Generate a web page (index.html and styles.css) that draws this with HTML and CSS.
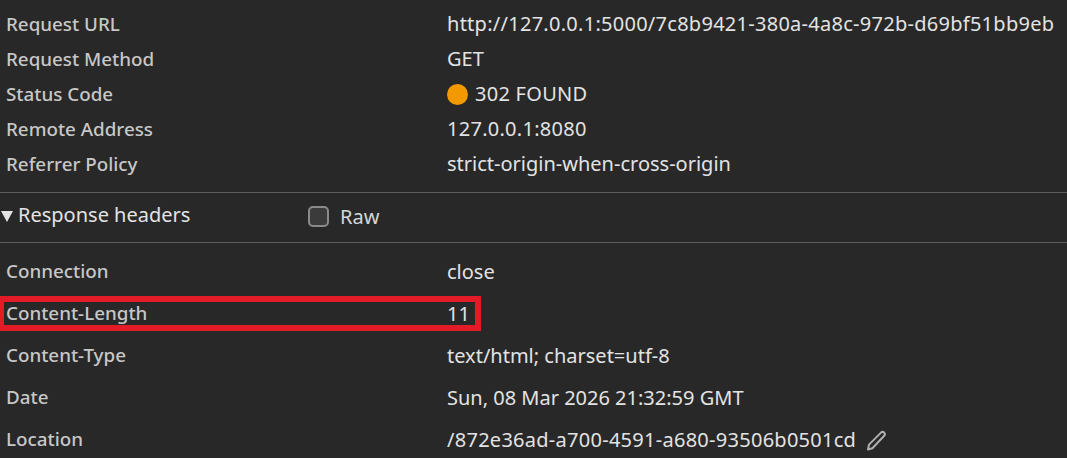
FILE: index.html
```html
<!DOCTYPE html>
<html lang="en">

<head>
  <meta charset="UTF-8" />
  <title>Network – Headers</title>
  <link rel="stylesheet" href="styles.css">
</head>

<body>
  <section class="general">
    <div class="row"><span class="name">Request URL</span><span class="value wide">http://127.0.0.1:5000/7c8b9421-380a-4a8c-972b-d69bf51bb9eb</span></div>
    <div class="row"><span class="name">Request Method</span><span class="value">GET</span></div>
    <div class="row"><span class="name">Status Code</span><span class="value wide"><i class="status-dot"></i>302 FOUND</span></div>
    <div class="row"><span class="name">Remote Address</span><span class="value wide">127.0.0.1:8080</span></div>
    <div class="row"><span class="name">Referrer Policy</span><span class="value">strict-origin-when-cross-origin</span></div>
  </section>

  <div class="section-title">
    <span class="arrow"></span>
    <span class="title-text">Response headers</span>
    <label class="raw"><span class="checkbox"></span>Raw</label>
  </div>

  <section class="headers">
    <div class="row"><span class="name">Connection</span><span class="value">close</span></div>
    <div class="row highlighted"><span class="name">Content-Length</span><span class="value">11</span><span class="red-box"></span></div>
    <div class="row"><span class="name">Content-Type</span><span class="value">text/html; charset=utf-8</span></div>
    <div class="row"><span class="name">Date</span><span class="value">Sun, 08 Mar 2026 21:32:59 GMT</span></div>
    <div class="row">
      <span class="name">Location</span>
      <span class="value wide">/872e36ad-a700-4591-a680-93506b0501cd
        <svg class="edit-icon" width="22" height="22" viewBox="0 0 22 22" fill="none" stroke="#b0b0b0" stroke-width="2" stroke-linejoin="round">
          <path d="M2 20.5 L3 15.6 L15 3.6 Q16.6 2.2 18.2 3.6 Q19.6 5.2 18.2 6.8 L6.4 19.2 Z" />
        </svg>
      </span>
    </div>
  </section>
</body>

</html>
```

FILE: styles.css
```css
* {
  margin: 0;
  padding: 0;
  box-sizing: border-box;
}

body {
  font-family: "Noto Sans", "Open Sans", sans-serif;
  font-size: 20px;
  background-color: #282828;
  color: #e3e3e3;
  overflow: hidden;
}

.general {
  padding: 7px 0 10px;
  border-bottom: 1px solid #5e5e5e;
}

.row {
  position: relative;
  display: flex;
  align-items: center;
  padding: 0 0 2px 6px;
}

.general .row {
  height: 35px;
}

.headers {
  padding-top: 8px;
}

.headers .row {
  height: 42px;
}

.name {
  width: 441px;
  flex-shrink: 0;
  font-size: 18.8px;
  font-weight: 500;
  color: #c7c7c7;
}

.value {
  display: flex;
  align-items: center;
  white-space: nowrap;
  font-size: 20px;
}

/* digits run wider in the original font */
.value.wide {
  letter-spacing: 0.27px;
}

.status-dot {
  width: 21px;
  height: 21px;
  margin: 2px 7px 0 0;
  border-radius: 50%;
  background-color: #f29900;
}

.section-title {
  display: flex;
  align-items: center;
  height: 50px;
  border-bottom: 1px solid #5e5e5e;
  padding-left: 1px;
}

.arrow {
  width: 0;
  height: 0;
  margin: 0 5px 3px 0;
  border-left: 6px solid transparent;
  border-right: 6px solid transparent;
  border-top: 11px solid #e3e3e3;
}

.title-text {
  width: 290px;
  margin-bottom: 7px;
  font-size: 20px;
}

.raw {
  display: flex;
  align-items: center;
  margin-bottom: 3px;
  font-size: 20px;
  color: #d6d6d6;
}

.checkbox {
  width: 21px;
  height: 21px;
  margin-right: 11px;
  border: 2px solid #8a8a8a;
  border-radius: 5px;
  background-color: #3b3b3b;
}

.edit-icon {
  margin: 2px 0 0 10px;
}

/* annotation drawn over the screenshot */
.red-box {
  position: absolute;
  left: -2px;
  top: 3px;
  width: 483px;
  height: 35px;
  border: 6px solid #e21b26;
}
```
